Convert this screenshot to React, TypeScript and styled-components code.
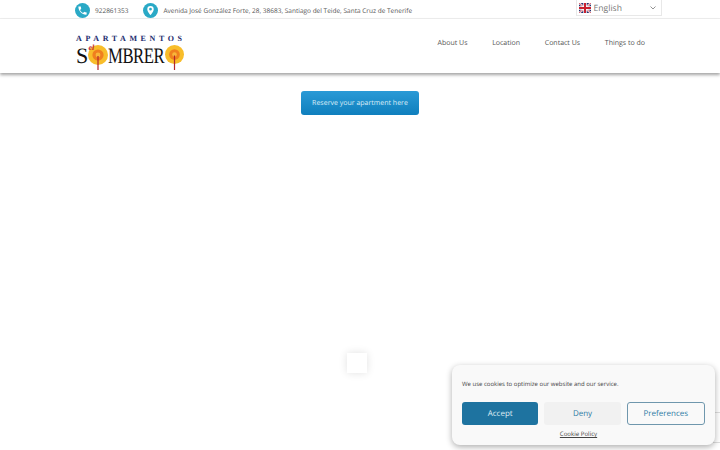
import React from 'react';
import styled, { createGlobalStyle } from 'styled-components';

const GlobalStyle = createGlobalStyle`
  html, body {
    margin: 0;
    padding: 0;
    background: #ffffff;
    font-family: 'Open Sans', 'Noto Sans', sans-serif;
    text-rendering: geometricPrecision;
    overflow: hidden;
  }
  * { box-sizing: border-box; }
`;

const Page = styled.div`
  position: relative;
  width: 720px;
  height: 450px;
  overflow: hidden;
`;

const TopBar = styled.div`
  display: flex;
  align-items: flex-start;
  justify-content: space-between;
  height: 19px;
  padding: 0 58px 0 75px;
  border-bottom: 1px solid #f0f0f0;
`;

const ContactList = styled.div`
  display: flex;
  align-items: center;
  gap: 15px;
  margin-top: 3px;
`;

const ContactItem = styled.div`
  display: flex;
  align-items: center;
  gap: 5px;
  height: 15px;
  font-size: 6.5px;
  color: #555555;
  white-space: nowrap;
`;

const IconCircle = styled.span`
  display: flex;
  align-items: center;
  justify-content: center;
  width: 15px;
  height: 15px;
  border-radius: 50%;
  background: #2aa9c6;
`;

const LangSelect = styled.div`
  display: flex;
  align-items: center;
  width: 86px;
  height: 16px;
  padding: 0 4px 0 2px;
  background: #ffffff;
  border: 1px solid #e8e8e8;
  border-top: none;
  font-size: 8.6px;
  color: #777777;
`;

const LangLabel = styled.span`
  flex: 1;
  margin-left: 2.5px;
`;

const Header = styled.header`
  display: flex;
  align-items: center;
  justify-content: space-between;
  height: 54px;
  padding: 0 75px;
  background: #ffffff;
  box-shadow: 0 2px 3px rgba(0, 0, 0, 0.36);
`;

const Logo = styled.div`
  display: flex;
  flex-direction: column;
  width: 110px;
  margin-top: 14px;
  font-family: 'Liberation Serif', serif;
`;

const LogoTop = styled.div`
  padding-left: 1px;
  font-size: 8px;
  font-weight: 700;
  line-height: 8px;
  letter-spacing: 3.6px;
  color: #1e2c6e;
  white-space: nowrap;
`;

const LogoBottom = styled.div`
  position: relative;
  display: flex;
  align-items: flex-start;
  height: 28px;
  padding: 2.5px 0 0 1px;
  font-size: 22px;
  line-height: 20px;
  color: #111111;
`;

const LogoCondensed = styled.span`
  display: inline-block;
  width: 57px;
  transform: scaleX(0.76);
  transform-origin: left center;
  letter-spacing: -0.6px;
  white-space: nowrap;
`;

const LogoEl = styled.span`
  position: absolute;
  left: 13.5px;
  top: 2px;
  font-size: 8px;
  line-height: 6px;
  font-style: italic;
  font-weight: 700;
  color: #c4262e;
`;

const SunIcon = styled.svg`
  flex-shrink: 0;
  margin-top: -0.5px;
`;

const Nav = styled.nav`
  display: flex;
  gap: 24.7px;
  margin-bottom: 5px;
  font-size: 7px;
  color: #555555;
`;

const Main = styled.main`
  display: flex;
  justify-content: center;
  padding-top: 18px;
`;

const ReserveButton = styled.a`
  display: flex;
  align-items: center;
  justify-content: center;
  width: 118px;
  height: 24px;
  border-radius: 3px;
  background: linear-gradient(#2a9ad6, #0f7fbd);
  color: #dcedf7;
  font-size: 7px;
`;

const Loader = styled.div`
  position: absolute;
  left: 347px;
  top: 353px;
  width: 20px;
  height: 20px;
  background: #ffffff;
  box-shadow: 0 0 8px rgba(0, 0, 0, 0.12);
`;

const Recaptcha = styled.div`
  position: absolute;
  left: 700px;
  top: 412px;
  width: 40px;
  height: 31px;
  background: #ffffff;
  border: 1px solid #dddddd;
`;

const CookieBanner = styled.div`
  position: absolute;
  left: 452px;
  top: 365px;
  display: flex;
  flex-direction: column;
  width: 263px;
  height: 80px;
  padding: 15px 10px 0;
  background: #f9f9f9;
  border-radius: 8px;
  box-shadow: 0 2px 6px rgba(0, 0, 0, 0.32);
`;

const CookieText = styled.div`
  font-size: 6px;
  line-height: 9px;
  color: #444444;
`;

const CookieButtons = styled.div`
  display: flex;
  gap: 6px;
  margin-top: 13px;
`;

const CookieButton = styled.div<{ $variant: 'accept' | 'deny' | 'prefs' }>`
  display: flex;
  align-items: center;
  justify-content: center;
  flex: 1;
  height: 23px;
  border-radius: 3px;
  font-size: 8px;
  background: ${(p) => (p.$variant === 'accept' ? '#1e73a0' : p.$variant === 'deny' ? '#f1f1f1' : '#f9f9f9')};
  color: ${(p) => (p.$variant === 'accept' ? '#dfecf3' : '#2f7ba4')};
  border: ${(p) => (p.$variant === 'prefs' ? '1px solid #6f97ad' : 'none')};
`;

const CookieLink = styled.a`
  align-self: center;
  margin: 4px 10px 0 0;
  font-size: 6.1px;
  line-height: 9px;
  color: #444444;
  text-decoration: underline;
`;

function Sun({ size, stem }: { size: number; stem: number }) {
  return (
    <SunIcon width={size} height={stem} viewBox={`0 0 ${size} ${stem}`}>
      <circle cx={size / 2} cy={size / 2} r={size / 2} fill="#f8bd2a" />
      <circle cx={size / 2} cy={size / 2} r={size * 0.28} fill="#f07f1e" />
      <circle cx={size / 2} cy={size / 2} r={size * 0.12} fill="#f8b63a" />
      <rect x={size / 2 - 0.6} y={size / 2 + 1} width="1.2" height={stem - size / 2 - 1} fill="#b3262a" />
    </SunIcon>
  );
}

export default function App() {
  return (
    <Page>
      <GlobalStyle />
      <TopBar>
        <ContactList>
          <ContactItem>
            <IconCircle>
              <svg width="11" height="11" viewBox="0 0 24 24" fill="#ffffff">
                <path d="M6.6 10.8c1.4 2.8 3.8 5.1 6.6 6.6l2.2-2.2c.3-.3.7-.4 1-.2 1.1.4 2.3.6 3.6.6.6 0 1 .4 1 1V20c0 .6-.4 1-1 1C10.6 21 3 13.4 3 4c0-.6.4-1 1-1h3.5c.6 0 1 .4 1 1 0 1.300.2 2.500.6 3.600.1.300 0 .700-.2 1z" />
              </svg>
            </IconCircle>
            922861353
          </ContactItem>
          <ContactItem>
            <IconCircle>
              <svg width="11" height="11" viewBox="0 0 24 24" fill="#ffffff">
                <path fillRule="evenodd" d="M12 2a7 7 0 0 0-7 7c0 5.200 7 13 7 13s7-7.800 7-13a7 7 0 0 0-7-7zm0 4a3 3 0 1 1 0 6 3 3 0 0 1 0-6z" />
              </svg>
            </IconCircle>
            Avenida José González Forte, 28, 38683, Santiago del Teide, Santa Cruz de Tenerife
          </ContactItem>
        </ContactList>
        <LangSelect>
          <svg width="12" height="10" viewBox="0 0 12 10">
            <rect width="12" height="10" fill="#27306e" />
            <path d="M0 0l12 10M12 0L0 10" stroke="#ffffff" strokeWidth="2" />
            <path d="M0 0l12 10M12 0L0 10" stroke="#c8202f" strokeWidth="0.7" />
            <path d="M6 0v10M0 5h12" stroke="#ffffff" strokeWidth="3.4" />
            <path d="M6 0v10M0 5h12" stroke="#c8202f" strokeWidth="2" />
          </svg>
          <LangLabel>English</LangLabel>
          <svg width="8" height="8" viewBox="0 0 8 8" fill="none" stroke="#777777" strokeWidth="0.8">
            <path d="M1.500 2.500L4 5L6.500 2.500" />
          </svg>
        </LangSelect>
      </TopBar>
      <Header>
        <Logo>
          <LogoTop>APARTAMENTOS</LogoTop>
          <LogoBottom>
            <LogoEl>el</LogoEl>
            S
            <Sun size={20} stem={25} />
            <LogoCondensed>MBRER</LogoCondensed>
            <Sun size={19} stem={25} />
          </LogoBottom>
        </Logo>
        <Nav>
          <span>About Us</span>
          <span>Location</span>
          <span>Contact Us</span>
          <span>Things to do</span>
        </Nav>
      </Header>
      <Main>
        <ReserveButton>Reserve your apartment here</ReserveButton>
      </Main>
      <Loader />
      <Recaptcha />
      <CookieBanner>
        <CookieText>We use cookies to optimize our website and our service.</CookieText>
        <CookieButtons>
          <CookieButton $variant="accept">Accept</CookieButton>
          <CookieButton $variant="deny">Deny</CookieButton>
          <CookieButton $variant="prefs">Preferences</CookieButton>
        </CookieButtons>
        <CookieLink>Cookie Policy</CookieLink>
      </CookieBanner>
    </Page>
  );
}
